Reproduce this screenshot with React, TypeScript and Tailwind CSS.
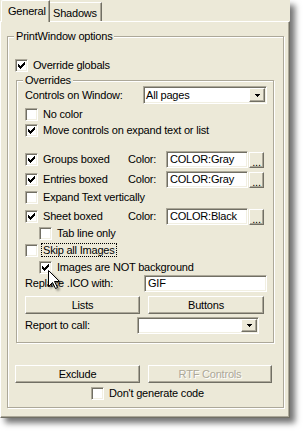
import React from 'react';

const field =
  'bg-white border border-t-[#ACA899] border-l-[#ACA899] border-r-white border-b-white shadow-[inset_1px_1px_0_#716F64,inset_-1px_-1px_0_#F1EFE2]';
const raised =
  'bg-[#ECE9D8] border border-t-white border-l-white border-r-[#716F64] border-b-[#716F64] shadow-[inset_-1px_-1px_0_#ACA899]';
const etched = 'border border-[#ACA899] shadow-[inset_1px_1px_0_#fff,1px_1px_0_#fff]';

const tick = [
  [6, 0], [5, 1], [6, 1], [0, 2], [4, 2], [5, 2], [6, 2], [0, 3], [1, 3], [3, 3], [4, 3], [5, 3],
  [0, 4], [1, 4], [2, 4], [3, 4], [4, 4], [1, 5], [2, 5], [3, 5], [2, 6],
];

function Check({ checked }: { checked?: boolean }) {
  return (
    <span className={`w-[13px] h-[13px] shrink-0 flex items-center justify-center ${field}`}>
      {checked && (
        <svg width="7" height="7" viewBox="0 0 7 7" shapeRendering="crispEdges">
          {tick.map(([x, y], i) => (
            <rect key={i} x={x} y={y} width="1" height="1" fill="#000" />
          ))}
        </svg>
      )}
    </span>
  );
}

function CheckRow({ label, checked, h = 'h-[16px]', cls = '' }: { label: string; checked?: boolean; h?: string; cls?: string }) {
  return (
    <div className={`${h} flex items-center gap-[5px] ${cls}`}>
      <Check checked={checked} />
      <span>{label}</span>
    </div>
  );
}

function Arrow() {
  return (
    <svg width="5" height="3" viewBox="0 0 5 3" shapeRendering="crispEdges">
      <path d="M0 0h5v1H0zM1 1h3v1H1zM2 2h1v1H2z" fill="#000" />
    </svg>
  );
}

function Combo({ w, value = '' }: { w: string; value?: string }) {
  return (
    <div className={`${w} h-full flex items-center ${field}`}>
      <span className="flex-1 pl-[2px]">{value}</span>
      <span className={`w-[16px] h-[calc(100%-2px)] mr-px flex items-center justify-center ${raised}`}>
        <Arrow />
      </span>
    </div>
  );
}

function ColorRow({ label, value, checked, cls }: { label: string; value: string; checked?: boolean; cls: string }) {
  return (
    <div className={`h-[17px] flex items-center ${cls}`}>
      <div className="w-[103px] flex items-center gap-[5px]">
        <Check checked={checked} />
        <span>{label}</span>
      </div>
      <span className="w-[38px]">Color:</span>
      <div className={`w-[82px] h-full flex items-center pl-[3px] ${field}`}>{value}</div>
      <button className={`ml-px w-[15px] h-[16px] flex items-end justify-center pb-[2px] leading-[6px] ${raised}`}>...</button>
    </div>
  );
}

export default function App() {
  return (
    <div className="relative w-[303px] h-[431px] bg-white overflow-hidden font-['Liberation_Sans',Arial,sans-serif] text-[11px] leading-[13px] tracking-[-0.2px] text-black">
      <div className="w-[290px] h-[418px] bg-[#ECE9D8] flex flex-col shadow-[5px_5px_6px_rgba(0,0,0,0.55)]">
        {/* tabs */}
        <div className="h-[21px] flex items-end pl-px">
          <div className="relative z-10 -mb-px h-[22px] w-[49px] pl-[6px] pt-[4px] bg-[#ECE9D8] border-l border-t border-white border-r border-r-[#716F64] rounded-tl-[2px] shadow-[inset_-1px_0_0_#ACA899]">
            General
          </div>
          <div className="h-[19px] w-[52px] pl-[3px] pt-[4px] border-t border-white border-r border-r-[#716F64] shadow-[inset_-1px_0_0_#ACA899]">
            Shadows
          </div>
        </div>
        {/* page */}
        <div className="h-[397px] border border-t-white border-l-white border-r-[#716F64] border-b-[#716F64] shadow-[inset_-1px_-1px_0_#ACA899]">
          <div className={`mt-[14px] ml-[6px] w-[277px] h-[372px] flex flex-col ${etched}`}>
            <div className="h-[13px] -mt-[7px] ml-[6px] px-[2px] w-fit bg-[#ECE9D8]">PrintWindow options</div>
            <CheckRow label="Override globals" checked cls="mt-[14px] ml-[7px]" />

            <div className={`mt-[7px] ml-[8px] w-[258px] h-[263px] flex flex-col ${etched}`}>
              <div className="h-[13px] -mt-[7px] -mb-px ml-[6px] px-[2px] w-fit bg-[#ECE9D8]">Overrides</div>
              <div className="h-[18px] flex items-center ml-[8px]">
                <span className="w-[118px]">Controls on Window:</span>
                <Combo w="w-[124px]" value="All pages" />
              </div>
              <CheckRow label="No color" cls="mt-[2px] ml-[8px]" />
              <CheckRow label="Move controls on expand text or list" checked cls="ml-[8px]" />
              <ColorRow label="Groups boxed" value="COLOR:Gray" checked cls="mt-[13px] ml-[8px]" />
              <ColorRow label="Entries boxed" value="COLOR:Gray" checked cls="mt-[3px] ml-[8px]" />
              <CheckRow label="Expand Text vertically" cls="mt-px ml-[8px]" />
              <ColorRow label="Sheet boxed" value="COLOR:Black" checked cls="mt-[3px] ml-[8px]" />
              <CheckRow label="Tab line only" cls="ml-[22px]" />
              <div className="h-[16px] mt-px ml-[8px] flex items-center gap-[3px]">
                <Check />
                <span className="px-px border border-dotted border-black leading-[12px]">Skip all Images</span>
              </div>
              <CheckRow label="Images are NOT background" checked cls="mt-px ml-[22px]" />
              <div className="h-[17px] flex items-center ml-[8px]">
                <span className="w-[119px]">Replace .ICO with:</span>
                <div className={`w-[123px] h-full flex items-center pl-[3px] ${field}`}>GIF</div>
              </div>
              <div className="h-[18px] mt-[4px] ml-[8px] flex gap-[8px]">
                <button className={`w-[115px] h-full ${raised}`}>Lists</button>
                <button className={`w-[116px] h-full ${raised}`}>Buttons</button>
              </div>
              <div className="h-[17px] mt-[3px] ml-[8px] flex items-center">
                <span className="w-[112px]">Report to call:</span>
                <Combo w="w-[122px]" />
              </div>
            </div>

            <div className="h-[18px] mt-[22px] ml-[7px] flex gap-[8px]">
              <button className={`w-[125px] h-full ${raised}`}>Exclude</button>
              <button className={`w-[124px] h-full text-[#ACA899] [text-shadow:1px_1px_0_#fff] ${raised}`}>RTF Controls</button>
            </div>
            <CheckRow label="Don't generate code" cls="mt-[2px] ml-[83px]" />
          </div>
        </div>
      </div>

      {/* mouse pointer */}
      <svg
        className="absolute left-[48px] top-[270px] drop-shadow-[2px_2px_1px_rgba(0,0,0,0.4)]"
        width="13"
        height="20"
        viewBox="0 0 13 20"
      >
        <path d="M0.5 0.5V16.5L4.5 12.5L7.5 18.5L9.5 17.5L6.5 11.5H11.5Z" fill="#fff" stroke="#000" strokeWidth="1" />
      </svg>
    </div>
  );
}
